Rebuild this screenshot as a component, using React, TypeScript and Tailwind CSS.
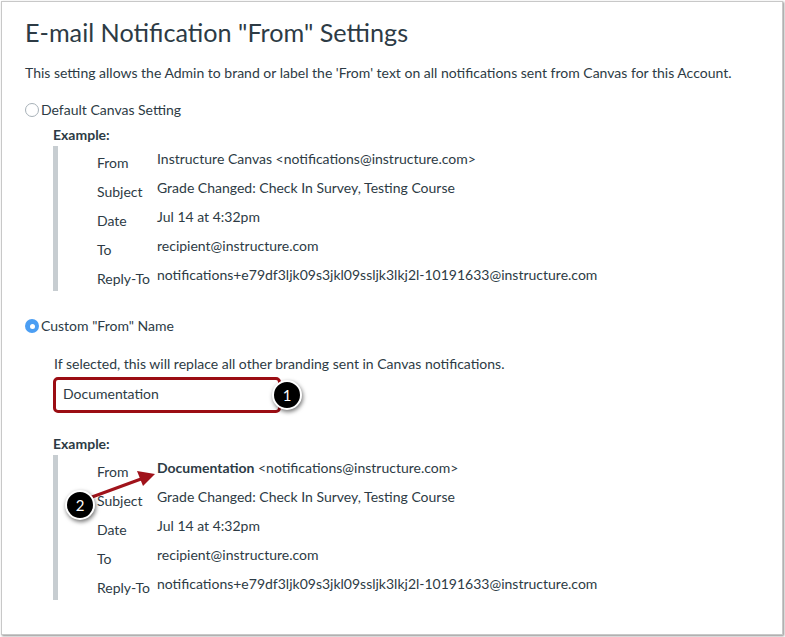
const rowsDefault = [
  { label: "From", value: <>Instructure Canvas &lt;notifications@instructure.com&gt;</> },
  { label: "Subject", value: <>Grade Changed: Check In Survey, Testing Course</> },
  { label: "Date", value: <>Jul 14 at 4:32pm</> },
  { label: "To", value: <>recipient@instructure.com</> },
  { label: "Reply-To", value: <>notifications+e79df3ljk09s3jkl09ssljk3lkj2l-10191633@instructure.com</> },
];

const rowsCustom = [
  {
    label: "From",
    value: (
      <>
        <span className="font-bold">Documentation</span> &lt;notifications@instructure.com&gt;
      </>
    ),
  },
  ...rowsDefault.slice(1),
];

function ExampleBlock({ rows }: { rows: { label: string; value: React.ReactNode }[] }) {
  return (
    <div className="ml-[28px]">
      <div className="font-bold text-[14px] leading-[18px]">Example:</div>
      <div className="mt-[2px] border-l-[5px] border-[#c7cdd1] pl-[39px]">
        {rows.map((r) => (
          <div key={r.label} className="flex h-[29px]">
            <div className="w-[60px] pt-[8px] leading-[18px]">{r.label}</div>
            <div className="pt-[4px] leading-[18px] whitespace-nowrap">{r.value}</div>
          </div>
        ))}
      </div>
    </div>
  );
}

function Callout({ n, className }: { n: number; className: string }) {
  return (
    <div
      className={
        "absolute w-[30px] h-[30px] rounded-full bg-black text-white border-2 border-white flex items-center justify-center text-[15px] shadow-[1px_2px_4px_rgba(0,0,0,0.55)] " +
        className
      }
    >
      {n}
    </div>
  );
}

export default function App() {
  return (
    <div
      className="w-[785px] h-[637px] bg-white p-[1px] pr-[2px] pb-[2px] text-[#2d3b45] text-[14px]"
      style={{ fontFamily: "Lato, 'Open Sans', sans-serif" }}
    >
      <div className="relative w-full h-full border border-[#c8c8c8] shadow-[1px_1px_2px_rgba(0,0,0,0.45)] pl-[23px] pt-[15px]">
        <h1 className="text-[25.2px] leading-[30px] font-normal">E-mail Notification "From" Settings</h1>
        <p className="mt-[17px] leading-[18px]">
          This setting allows the Admin to brand or label the 'From' text on all notifications sent from Canvas for this Account.
        </p>

        <div className="mt-[19px] flex items-center gap-[2px] leading-[18px]">
          <span className="w-[14px] h-[14px] rounded-full border border-[#a7b1b8] bg-white" />
          <span>Default Canvas Setting</span>
        </div>

        <div className="mt-[7px]">
          <ExampleBlock rows={rowsDefault} />
        </div>

        <div className="mt-[26px] flex items-center gap-[2px] leading-[18px]">
          <span className="w-[14px] h-[14px] rounded-full bg-[#4b9ef3] flex items-center justify-center">
            <span className="w-[5px] h-[5px] rounded-full bg-white" />
          </span>
          <span>Custom "From" Name</span>
        </div>

        <p className="ml-[29px] mt-[20px] leading-[18px]">
          If selected, this will replace all other branding sent in Canvas notifications.
        </p>
        <div className="ml-[28px] mt-[4px] w-[228px] h-[36px] rounded-[5px] border-[3px] border-[#9b0d13] flex items-center pl-[7px] pb-[3px]">
          Documentation
        </div>

        <div className="mt-[22px]">
          <ExampleBlock rows={rowsCustom} />
        </div>

        <Callout n={1} className="left-[270px] top-[378px]" />

        <svg className="absolute left-0 top-0 pointer-events-none" width="780" height="630">
          <line x1="90" y1="495" x2="139" y2="477" stroke="#a0131b" strokeWidth="3" strokeLinecap="round" />
          <polygon points="153,472 135,469 141,484" fill="#a0131b" />
        </svg>
        <Callout n={2} className="left-[63px] top-[488px]" />
      </div>
    </div>
  );
}
